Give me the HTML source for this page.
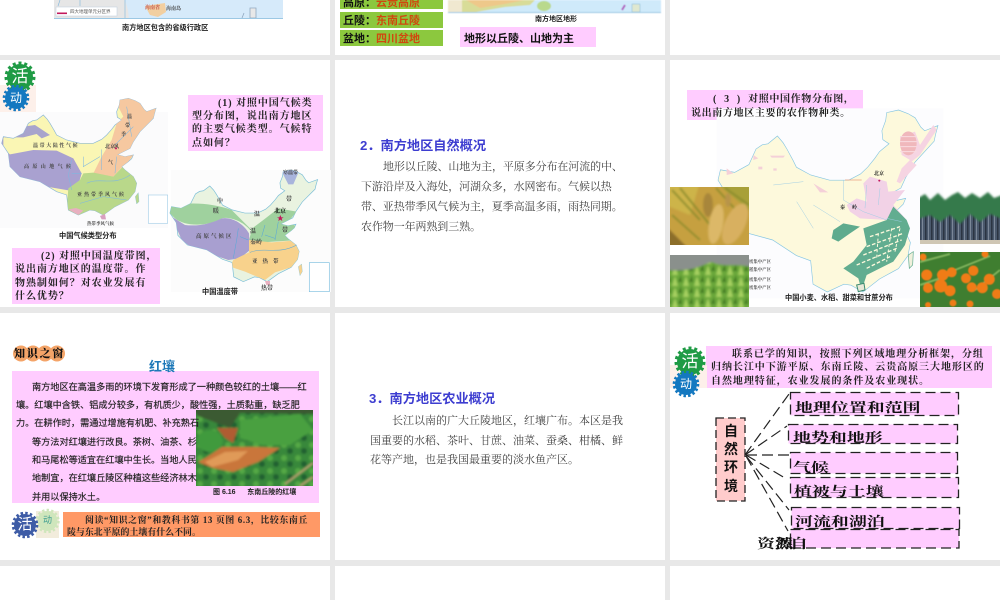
<!DOCTYPE html>
<html lang="zh"><head><meta charset="utf-8"><title>南方地区</title>
<style>
html,body{margin:0;padding:0;background:#e8e8e8}
#p{position:relative;width:1000px;height:600px;overflow:hidden;background:#e8e8e8;font-family:"Liberation Serif","Noto Serif CJK SC",serif}
.s{position:absolute;background:#fff}
.b{position:absolute}
.t{position:absolute;white-space:nowrap;line-height:14px;color:#222}
.sa{font-family:"Liberation Sans","Noto Sans CJK SC",sans-serif}
.q{font-size:10px;letter-spacing:.95px;font-weight:700;color:#222}
.c{font-family:"Liberation Sans","Noto Sans CJK SC",sans-serif;font-weight:700;color:#222}
.h{font-family:"Liberation Sans","Noto Sans CJK SC",sans-serif;font-weight:700;font-size:13.2px;color:#3d3dd0}
.d{font-size:11px;color:#444}
.r{font-family:"Liberation Sans","Noto Sans CJK SC",sans-serif;font-size:9.17px;color:#222;-webkit-text-stroke:.15px #222}
.o{font-size:8.9px;font-weight:700;color:#222}
.w{font-size:13px;font-weight:700;color:#111;transform-origin:0 50%;transform:scaleX(1.38)}
.z{font-size:11px;font-weight:700;color:#111;font-family:"Liberation Sans","Noto Sans CJK SC",sans-serif}
.m{font-size:5px;font-weight:700;color:#444}
.g{font-family:"Liberation Sans","Noto Sans CJK SC",sans-serif;color:#fff;text-align:center}
svg{position:absolute;left:0;top:0}
</style></head><body><div id="p">
<div class="s" style="left:0;top:0;width:330px;height:55px"></div>
<div class="s" style="left:335px;top:0;width:330px;height:55px"></div>
<div class="s" style="left:670px;top:0;width:330px;height:55px"></div>
<div class="s" style="left:0;top:60px;width:330px;height:247px"></div>
<div class="s" style="left:335px;top:60px;width:330px;height:247px"></div>
<div class="s" style="left:670px;top:60px;width:330px;height:247px"></div>
<div class="s" style="left:0;top:313px;width:330px;height:247px"></div>
<div class="s" style="left:335px;top:313px;width:330px;height:247px"></div>
<div class="s" style="left:670px;top:313px;width:330px;height:247px"></div>
<div class="s" style="left:0;top:566px;width:330px;height:34px"></div>
<div class="s" style="left:335px;top:566px;width:330px;height:34px"></div>
<div class="s" style="left:670px;top:566px;width:330px;height:34px"></div>

<div class="b" style="left:188px;top:95px;width:135px;height:56px;background:#fcf"></div>
<div class="b" style="left:12px;top:248px;width:148px;height:56px;background:#fcf"></div>
<div class="b" style="left:687px;top:90px;width:176px;height:30px;background:#fcf"></div>
<div class="b" style="left:12px;top:371px;width:307px;height:132px;background:#fcf"></div>
<div class="b" style="left:706px;top:346px;width:286px;height:42px;background:#fcf"></div>
<div class="b" style="left:460px;top:27px;width:136px;height:20px;background:#fcf"></div>
<div class="b" style="left:340px;top:0;width:103px;height:9px;background:#8cc83e"></div>
<div class="b" style="left:340px;top:12px;width:103px;height:16px;background:#8cc83e"></div>
<div class="b" style="left:340px;top:30px;width:103px;height:16px;background:#8cc83e"></div>
<div class="b" style="left:63px;top:512px;width:257px;height:25px;background:#f96"></div>
<div class="b" style="left:36px;top:511px;width:23px;height:27px;background:#f2ecdc"></div>
<div class="b" style="left:0;top:85px;width:36px;height:27px;background:#fdf0ea"></div>
<div class="b" style="left:670px;top:365px;width:37px;height:23px;background:#fdf0ea"></div>

<svg width="1000" height="600" viewBox="0 0 1000 600" style="filter:blur(.3px)">
<defs>
<path id="cn" d="M85,190 L98,182 110,180 130,165 142,178 150,190 163,212 170,225 200,240 240,250 280,250 305,238 320,225 335,208 345,195 365,180 352,172 350,155 358,135 360,120 385,115 405,122 420,130 432,148 440,155 468,145 463,162 460,175 440,195 420,215 400,245 390,265 360,280 352,284 375,290 400,285 395,296 385,305 365,320 375,330 400,350 410,370 405,395 385,420 345,440 310,465 285,452 270,450 235,465 205,450 200,405 170,395 120,365 60,350 30,320 25,280 5,250 10,230 40,235 70,220 Z"/>
<clipPath id="c1"><use href="#cn"/></clipPath>
<clipPath id="c2"><use href="#cn" transform="translate(10,-95) scale(.957)"/></clipPath>
<filter id="bm" x="-5%" y="-5%" width="110%" height="110%"><feGaussianBlur stdDeviation=".45"/></filter>
<filter id="bp" x="-5%" y="-5%" width="110%" height="110%"><feGaussianBlur stdDeviation="1"/></filter>
<pattern id="cane" width="6" height="40" patternUnits="userSpaceOnUse"><rect width="6" height="40" fill="#4a586c"/><rect x="1" width="1.5" height="40" fill="#2b3442"/><rect x="4" width="1" height="40" fill="#7b8798"/></pattern>
<pattern id="leaf" width="11" height="11" patternUnits="userSpaceOnUse"><rect width="11" height="11" fill="#6ba83a"/><path d="M1,11 L4,1 7,11Z" fill="#a6d060"/><path d="M7,7 L10,0 11,7Z" fill="#427a24"/></pattern>
<pattern id="forest" width="14" height="13" patternUnits="userSpaceOnUse"><rect width="14" height="13" fill="#38883a"/><circle cx="4" cy="3" r="3" fill="#55a844"/><circle cx="10" cy="9" r="3" fill="#216030"/></pattern>
</defs>

<!-- top-left map fragment -->
<rect x="54" y="0" width="229" height="19" fill="#d6eafa"/>
<path d="M54,0 H125 L128,10 129,19 H54Z" fill="#e6e6e6"/>
<rect x="56" y="7" width="61" height="9" fill="#fff" stroke="#bcd" stroke-width=".5"/>
<rect x="57" y="12.5" width="10" height="1.6" fill="#c2185b"/>
<path d="M145,6 L165,3 166,12 158,17 150,15Z" fill="#f2cfa0"/>
<path d="M125,0 V19 M60,0 L58,6 M80,0 V6" stroke="#7fb6dc" stroke-width=".6" fill="none"/>
<path d="M244,13 L242,18 M250,8 H256 V18 H250Z" stroke="#90a8c0" stroke-width=".8" fill="#e8e8e8"/>
<rect x="54" y="18" width="229" height="1" fill="#9cc8e4"/>

<!-- top-middle terrain map -->
<g filter="url(#bm)">
<rect x="448" y="0" width="213" height="13" fill="#cfeafa"/>
<path d="M448,0 H535 L530,5 505,7 470,13 H448Z" fill="#d8dc98"/>
<path d="M448,0 H462 V13 H448Z" fill="#f0e8d0"/>
<path d="M466,0 H525 L505,4 480,8Z" fill="#eec88a"/>
<ellipse cx="544" cy="6" rx="7" ry="5" fill="#b9d98c"/>
<path d="M625,5 L622,10" stroke="#b060c0" stroke-width="2"/>
<path d="M632,4 H640 V12 H632Z" fill="#e0e8d0" stroke="#7fb6dc" stroke-width=".5"/>
<rect x="448" y="12" width="213" height="1" fill="#9cc8e4"/>
</g>

<!-- climate map -->
<rect x="0" y="112" width="168" height="116" fill="#fbfbfc"/>
<g transform="translate(0,60) scale(.3333)" filter="url(#bm)">
<use href="#cn" fill="#faf6b4" stroke="#8cb8d8" stroke-width="2"/>
<g clip-path="url(#c1)">
<path d="M70,200 L105,195 150,225 125,235 110,222 70,232 10,232 V260 L0,240Z" fill="#a8a4cc"/>
<path d="M0,260 L30,283 100,270 170,272 220,295 245,340 235,375 210,392 140,380 60,360 0,320Z" fill="#a9a1d0"/>
<path d="M370,170 L350,190 335,240 305,290 280,340 340,350 365,322 385,305 400,285 375,288 355,284 395,268 430,210 480,150 400,100 340,110Z" fill="#f6c8a0"/>
<path d="M205,385 L240,360 250,340 280,338 340,350 370,318 400,340 430,380 400,430 340,460 300,480 230,470 200,450Z" fill="#b9d88a"/>
<path d="M205,448 L235,465 250,452 228,444Z" fill="#e8b0c0"/>
</g>
<path d="M215,300 L205,345 215,390 M215,340 L245,340 M260,370 C300,350 340,380 390,345 M250,290 L250,320 300,290 M305,268 V330 M350,290 L345,340 M240,430 L310,410 380,420 M380,140 L395,230 M345,255 L400,200" stroke="#7fb8e0" stroke-width="1.6" fill="none"/>
<path d="M300,468 L315,462 318,478 305,478Z" fill="#d8a0c0"/>
<path d="M406,410 L415,398 417,425 410,432Z" fill="#b9d88a" stroke="#7fb8e0"/>
<rect x="445" y="405" width="58" height="85" fill="#fff" stroke="#a8d0e8" stroke-width="2"/>
<circle cx="348" cy="265" r="3" fill="#c2185b"/>
</g>

<!-- temperature zone map -->
<rect x="171" y="170" width="160" height="122" fill="#fcfcfc"/>
<g transform="translate(165,165) scale(.3333)" filter="url(#bm)">
<use href="#cn" transform="translate(10,-95) scale(.957)" fill="#e9f3e0" stroke="#7fc0d8" stroke-width="2.2"/>
<g clip-path="url(#c2)">
<path d="M0,130 C50,110 130,110 200,135 L260,195 250,235 400,225 395,185 370,170 395,140 340,130 295,165 255,195 C230,165 190,155 170,160 C130,185 60,185 30,160Z" fill="#9fd19e"/>
<path d="M20,155 L60,180 C100,185 140,175 170,160 C200,155 235,175 252,205 L255,255 225,280 190,285 140,268 90,255 50,225Z" fill="#a89fd0"/>
<path d="M205,285 L252,262 252,225 320,232 395,226 420,260 385,305 330,322 300,345 240,320 195,305Z" fill="#f8d28c"/>
<path d="M340,0 H410 L385,58 370,58Z" fill="#a8b4dc"/>
</g>
<path d="M220,190 L215,225 205,280 M225,215 L250,225 M255,262 C300,245 340,270 395,240 M300,180 L290,215 M340,170 L330,225 M300,210 L330,220" stroke="#5aa8d8" stroke-width="1.6" fill="none"/>
<path d="M343,157 l3,-7 3,7 7,0 -6,4 2,7 -6,-4 -6,4 2,-7 -6,-4Z" fill="#c2185b"/>
<path d="M400,305 L410,297 412,320 405,332Z" fill="#f8d28c" stroke="#7fc0d8"/>
<path d="M300,348 L315,348 315,360 304,360Z" fill="#e8b0c0"/>
<rect x="433" y="293" width="60" height="87" fill="#fff" stroke="#7fc0e0" stroke-width="2"/>
</g>

<!-- crop map -->
<g transform="translate(720,105) scale(.3333)" filter="url(#bm)">
<rect x="-10" y="10" width="680" height="570" fill="#fcfcfe"/>
<use href="#cn" transform="translate(-13,-164.4) scale(1.425,1.56)" fill="#fdf9dc" stroke="#86c6e2" stroke-width="1.3"/>
<path d="M540,95 L585,80 600,120 640,60 650,75 600,150 575,170 590,180 540,235 530,230 545,190 570,165 545,150Z" fill="#f6d4e2"/>
<ellipse cx="565" cy="115" rx="25" ry="36" fill="#f0b8bc"/>
<path d="M540,95 H590 M540,110 H590 M540,125 H590 M540,140 H590" stroke="#f9dbe0" stroke-width="3"/>
<path d="M430,235 L450,215 500,230 505,260 555,255 520,300 560,345 500,345 420,340 390,320 380,300 410,280 440,290Z" fill="#f2d2e6"/>
<path d="M280,235 L325,262 300,262Z M100,150 L115,160 100,165Z M150,152 H195 L190,158 H155Z M20,190 L40,205 20,210Z M115,185 h12 v8 h-12Z M160,190 h10 v7 h-10Z" fill="#f4d0d8"/>
<path d="M340,375 L370,355 420,365 390,385 355,410 335,400Z" fill="#5fab8e"/>
<path d="M430,370 L500,345 520,305 560,345 570,370 555,420 520,470 440,510 425,555 415,520 370,490 400,470 440,420Z" fill="#62ad90"/>
<path d="M450,395 L540,365 M440,425 L550,385 M430,450 L545,405 M410,480 L530,430 M440,490 L510,455" stroke="#fdf9dc" stroke-width="4" stroke-dasharray="11 6" fill="none"/>
<path d="M475,385 L470,460 M515,370 L500,470 M540,370 L525,440" stroke="#fdf9dc" stroke-width="3" stroke-dasharray="9 7" fill="none"/>
<path d="M370,225 L370,285 430,320 500,345 M440,240 L435,310 M480,250 L475,300 M360,350 L280,300 M160,240 L250,230 M230,290 L280,370 M500,340 L545,350" stroke="#9ccce4" stroke-width="1.4" fill="none"/>
<path d="M375,225 H425" stroke="#e8a080" stroke-width="2"/>
<path d="M410,540 L432,535 435,555 415,560Z" fill="#e8e8d8" stroke="#3a8a70" stroke-width="3"/>
<path d="M565,450 L580,440 578,480 568,490Z" fill="#f0f0dc" stroke="#5fab8e" stroke-width="2"/>
<circle cx="478" cy="227" r="3" fill="#c2185b"/>
</g>

<!-- rice -->
<svg x="670" y="187" width="79" height="58" viewBox="670 187 79 58">
<g filter="url(#bp)">
<rect x="665" y="182" width="90" height="68" fill="#c6a040"/>
<path d="M665,182 H700 L690,215 665,205Z" fill="#cdb44a"/>
<path d="M715,182 H755 V215Z" fill="#a8a038"/>
<path d="M665,225 L690,250 H665Z" fill="#8c6e2a"/>
<path d="M672,190 L700,220 M680,188 L710,225 M716,188 L745,220 M725,188 L749,205 M672,215 L700,240" stroke="#8a8c2c" stroke-width="1.8" fill="none"/>
<ellipse cx="708" cy="205" rx="5" ry="12" fill="#a8863a"/><ellipse cx="716" cy="224" rx="7" ry="20" fill="#dcb868" transform="rotate(10 716 224)"/><ellipse cx="735" cy="224" rx="10" ry="22" fill="#d8b060" transform="rotate(25 735 224)"/><ellipse cx="728" cy="200" rx="3" ry="7" fill="#b89448"/>
</g></svg>
<!-- tea -->
<svg x="670" y="255" width="79" height="52" viewBox="670 255 79 52">
<g filter="url(#bp)" >
<rect x="665" y="250" width="90" height="62" fill="url(#leaf)"/>
<path d="M665,250 H755 V268 C735,262 725,268 712,262 C700,265 695,272 665,270Z" fill="#8a908c"/>
</g></svg>
<!-- sugar cane -->
<svg x="920" y="190" width="80" height="54" viewBox="920 190 80 54">
<rect x="920" y="207" width="80" height="33" fill="url(#cane)"/>
<g filter="url(#bp)">
<path d="M915,200 L925,194 930,200 938,193 945,200 952,195 958,192 965,198 972,193 980,198 988,192 994,198 1005,194 V220 L990,214 980,222 970,214 960,224 950,215 940,222 930,215 915,220Z" fill="#357a4c"/>
</g>
<rect x="920" y="240" width="80" height="4" fill="#cfc6b4"/>
</svg>
<!-- orange -->
<svg x="920" y="252" width="80" height="55" viewBox="920 252 80 55">
<rect x="920" y="252" width="80" height="55" fill="#3f7e30"/>
<g filter="url(#bm)">
<path d="M920,262 L950,254 M955,270 L990,256 M920,285 L950,275 M975,290 L1000,270" stroke="#7eb05a" stroke-width="2"/>
<g fill="#f07c14"><circle cx="926.7" cy="275" r="5.5"/><circle cx="942.7" cy="275" r="5.7"/><circle cx="951.7" cy="272.3" r="5"/><circle cx="973.3" cy="270.700" r="5.2"/><circle cx="966" cy="278.3" r="5"/><circle cx="989.3" cy="279.3" r="5.5"/><circle cx="940.7" cy="286" r="6.5"/><circle cx="950" cy="290.7" r="5.5"/><circle cx="971.7" cy="287.3" r="5"/><circle cx="982.3" cy="287.7" r="5.5"/><circle cx="997" cy="294" r="5"/><circle cx="928" cy="288" r="5"/><circle cx="923" cy="257" r="3.5"/><circle cx="985" cy="254" r="3.5"/><circle cx="953" cy="303" r="3.5"/><circle cx="970" cy="304" r="3.5"/><circle cx="928" cy="305" r="3"/></g>
</g></svg>
<!-- soil photo -->
<svg x="196" y="410" width="117" height="76" viewBox="196 410 117 76">
<g filter="url(#bp)">
<rect x="190" y="405" width="130" height="86" fill="url(#forest)"/>
<path d="M190,405 H320 V414 L240,413 230,428 198,416Z" fill="#3a5a30"/>
<path d="M240,420 L300,414 313,430 290,445 262,445 240,438Z" fill="#48a040"/>
<ellipse cx="210" cy="441" rx="13" ry="11" fill="#3f9a3c"/>
<path d="M217,428 L238,428 233,443 225,438Z" fill="#b05c30"/>
<path d="M222,447 L257,447 280,448 258,462 250,465 233,472 213,468 198,462 207,457Z" fill="#c9763a"/>
<path d="M205,462 L225,452 248,451 238,460 212,467Z" fill="#e09a58"/>
<path d="M285,484 L313,463 M300,486 L313,477" stroke="#b2a070" stroke-width="2"/>
</g></svg>
<!-- know badge -->
<g fill="#f4a468"><circle cx="21" cy="353.5" r="8"/><circle cx="33" cy="353.5" r="8"/><circle cx="45" cy="353.5" r="8"/><circle cx="57" cy="353.5" r="8"/></g>
<!-- gears -->
<circle cx="20" cy="77" r="13" fill="#1f9b45"/><circle cx="20" cy="77" r="14" fill="none" stroke="#1f9b45" stroke-width="3" stroke-dasharray="3 2.85"/>
<circle cx="16" cy="98" r="11" fill="#1478c0"/><circle cx="16" cy="98" r="12" fill="none" stroke="#1478c0" stroke-width="2.6" stroke-dasharray="2.5 2.2"/>
<circle cx="690" cy="362" r="13" fill="#1f9b45"/><circle cx="690" cy="362" r="14" fill="none" stroke="#1f9b45" stroke-width="3" stroke-dasharray="3 2.85"/>
<circle cx="686" cy="384" r="11" fill="#1478c0"/><circle cx="686" cy="384" r="12" fill="none" stroke="#1478c0" stroke-width="2.6" stroke-dasharray="2.5 2.2"/>
<circle cx="47.500" cy="521" r="10" fill="#cfe6bc"/><circle cx="47.500" cy="521" r="11" fill="none" stroke="#cfe6bc" stroke-width="2.4" stroke-dasharray="2.4 2.2"/>
<circle cx="25" cy="525" r="11" fill="#3e5ca6"/><circle cx="25" cy="525" r="12" fill="none" stroke="#3e5ca6" stroke-width="2.6" stroke-dasharray="2.5 2.2"/>

<!-- framework -->
<rect x="716" y="418" width="29" height="83" fill="#fcc" stroke="#222" stroke-width="1.3" stroke-dasharray="8 4"/>
<g fill="#fcf" stroke="#222" stroke-width="1.3" stroke-dasharray="10 5">
<rect x="790.500" y="392.500" width="168" height="23"/>
<rect x="788.500" y="424.500" width="169" height="19"/>
<rect x="790.500" y="452.500" width="167" height="21"/>
<rect x="790.500" y="477.500" width="168" height="20"/>
<rect x="791.500" y="507.500" width="168" height="21"/>
<rect x="790.500" y="529.500" width="168.500" height="18.500"/>
</g>
<g stroke="#222" stroke-width="1.2" stroke-dasharray="11 5" fill="none">
<path d="M745,455 L789,394"/><path d="M745,455 L787,426"/><path d="M746,455 H789"/><path d="M746,455 L785,478"/><path d="M746,456 L789,510"/><path d="M746,456 L788,531"/>
</g>
</svg>

<div style="position:absolute;inset:0;filter:blur(.3px)">
<div class="t c" style="left:122px;top:21px;font-size:7.200px">南方地区包含的省级行政区</div>
<div class="t sa" style="left:70px;top:5px;font-size:4.500px;color:#555">四大地理单元分区界</div>
<div class="t m" style="left:145px;top:2px;color:#c2504a">海南省</div><div class="t m" style="left:166px;top:3px">海南岛</div>
<div class="t z" style="left:343px;top:-4px">高原：<span style="color:#d0480e">云贵高原</span></div>
<div class="t z" style="left:343px;top:14px">丘陵：<span style="color:#d0480e">东南丘陵</span></div>
<div class="t z" style="left:343px;top:32px">盆地：<span style="color:#d0480e">四川盆地</span></div>
<div class="t c" style="left:535px;top:13px;font-size:7px">南方地区地形</div>
<div class="t z" style="left:464px;top:32px">地形以丘陵、山地为主</div>
<div class="t g" style="left:8px;top:67px;width:24px;font-size:17px;line-height:20px">活</div>
<div class="t g" style="left:5px;top:91px;width:22px;font-size:12px">动</div>
<div class="t q" style="left:218px;top:97px">(1) 对照中国气候类</div>
<div class="t q" style="left:192px;top:110px">型分布图，说出南方地区</div>
<div class="t q" style="left:192px;top:123px">的主要气候类型。气候特</div>
<div class="t q" style="left:192px;top:137px">点如何？</div>
<div class="t q" style="left:41px;top:250px">(2) 对照中国温度带图，</div>
<div class="t q" style="left:15px;top:263px">说出南方地区的温度带。作</div>
<div class="t q" style="left:15px;top:277px">物熟制如何？对农业发展有</div>
<div class="t q" style="left:15px;top:290px">什么优势？</div>
<div class="t c" style="left:59px;top:229px;font-size:7.200px">中国气候类型分布</div>
<div class="t c" style="left:202px;top:285px;font-size:7.200px">中国温度带</div>
<div class="t m" style="left:33px;top:140px;letter-spacing:1.600px">温带大陆性气候</div>
<div class="t m" style="left:24px;top:161px;letter-spacing:3.400px">高原山地气候</div>
<div class="t m" style="left:77px;top:189px;letter-spacing:2px">亚热带季风气候</div>
<div class="t m" style="left:87px;top:217px;font-size:4.500px">热带季风气候</div>
<div class="t m" style="left:127px;top:111px">温</div><div class="t m" style="left:125px;top:120px">带</div><div class="t m" style="left:121px;top:129px">季</div><div class="t m" style="left:114px;top:141px">风</div><div class="t m" style="left:108px;top:157px">气</div>
<div class="t m" style="left:105px;top:141px">北京</div>
<div class="t m" style="left:283px;top:167px">寒温带</div>
<div class="t m" style="left:217px;top:195px;font-size:6px">中</div><div class="t m" style="left:213px;top:205px;font-size:6px">暖</div><div class="t m" style="left:254px;top:208px;font-size:6px">温</div><div class="t m" style="left:286px;top:193px;font-size:6px">带</div>
<div class="t m" style="left:274px;top:205px;font-size:6px;color:#111">北京</div>
<div class="t m" style="left:196px;top:230px;font-size:5.500px;letter-spacing:2px">高原气候区</div>
<div class="t m" style="left:250px;top:225px;font-size:6px">温</div><div class="t m" style="left:250px;top:236px;font-size:6px">秦岭</div><div class="t m" style="left:282px;top:224px;font-size:6px">带</div>
<div class="t m" style="left:252px;top:255px;font-size:5.500px;letter-spacing:5px">亚热带</div>
<div class="t m" style="left:261px;top:282px;font-size:6px">热带</div>
<div class="t h" style="left:360px;top:139px">2．南方地区自然概况</div>
<div class="t d" style="left:383px;top:160px;letter-spacing:-.1px">地形以丘陵、山地为主，平原多分布在河流的中、</div>
<div class="t d" style="left:361px;top:180px;letter-spacing:-.1px">下游沿岸及入海处，河湖众多，水网密布。气候以热</div>
<div class="t d" style="left:361px;top:200px;letter-spacing:-.1px">带、亚热带季风气候为主，夏季高温多雨，雨热同期。</div>
<div class="t d" style="left:361px;top:220px;letter-spacing:-.1px">农作物一年两熟到三熟。</div>
<div class="t q" style="left:713px;top:93px;letter-spacing:.65px;word-spacing:4px">( 3 ) 对照中国作物分布图，</div>
<div class="t q" style="left:691px;top:107px;letter-spacing:.65px">说出南方地区主要的农作物种类。</div>
<div class="t c" style="left:785px;top:291px;font-size:7.200px">中国小麦、水稻、甜菜和甘蔗分布</div>
<div class="t m" style="left:749px;top:255px;color:#555;font-size:4.400px">密集中产区</div><div class="t m" style="left:749px;top:263px;color:#555;font-size:4.400px">稻集中产区</div><div class="t m" style="left:749px;top:273px;color:#555;font-size:4.400px">密集中产区</div><div class="t m" style="left:749px;top:281px;color:#555;font-size:4.400px">密集中产区</div>
<div class="t m" style="left:874px;top:168px;color:#222">北京</div><div class="t m" style="left:840px;top:202px;color:#222;letter-spacing:7px">秦岭</div>
<div class="t" style="left:14px;top:346px;font-size:11px;letter-spacing:1.800px;font-weight:900;color:#111;font-family:'Noto Serif CJK SC',serif">知识之窗</div>
<div class="t" style="left:149px;top:360px;font-size:13px;font-weight:700;color:#1d78b8;font-family:'Liberation Sans','Noto Sans CJK SC',sans-serif">红壤</div>
<div class="t r" style="left:32px;top:380px">南方地区在高温多雨的环境下发育形成了一种颜色较红的土壤——红</div>
<div class="t r" style="left:16px;top:398px">壤。红壤中含铁、铝成分较多，有机质少，酸性强，土质黏重，缺乏肥</div>
<div class="t r" style="left:16px;top:416px">力。在耕作时，需通过增施有机肥、补充熟石</div>
<div class="t r" style="left:32px;top:435px">等方法对红壤进行改良。茶树、油茶、杉</div>
<div class="t r" style="left:32px;top:453px">和马尾松等适宜在红壤中生长。当地人民</div>
<div class="t r" style="left:32px;top:471px">地制宜，在红壤丘陵区种植这些经济林木</div>
<div class="t r" style="left:32px;top:490px">并用以保持水土。</div>
<div class="t c" style="left:213px;top:486px;font-size:7px;white-space:pre">图 6.16      东南丘陵的红壤</div>
<div class="t g" style="left:13px;top:518px;width:24px;font-size:15px">活</div>
<div class="t g" style="left:37px;top:513px;width:21px;font-size:9px;color:#3c9c90">动</div>
<div class="t o" style="left:85px;top:513px;letter-spacing:.65px">阅读“知识之窗”和教科书第 13 页图 6.3，比较东南丘</div>
<div class="t o" style="left:67px;top:525px;letter-spacing:.05px">陵与东北平原的土壤有什么不同。</div>
<div class="t h" style="left:369px;top:392px">3．南方地区农业概况</div>
<div class="t d" style="left:392px;top:414px">长江以南的广大丘陵地区，红壤广布。本区是我</div>
<div class="t d" style="left:370px;top:434px">国重要的水稻、茶叶、甘蔗、油菜、蚕桑、柑橘、鲜</div>
<div class="t d" style="left:370px;top:453px">花等产地，也是我国最重要的淡水鱼产区。</div>
<div class="t g" style="left:678px;top:352px;width:24px;font-size:17px;line-height:20px">活</div>
<div class="t g" style="left:675px;top:377px;width:22px;font-size:12px">动</div>
<div class="t q" style="left:732px;top:348px">联系已学的知识，按照下列区域地理分析框架，分组</div>
<div class="t q" style="left:711px;top:361px">归纳长江中下游平原、东南丘陵、云贵高原三大地形区的</div>
<div class="t q" style="left:711px;top:375px">自然地理特征，农业发展的条件及农业现状。</div>
<div class="t c" style="left:724px;top:424px;font-size:14px;color:#111">自</div>
<div class="t c" style="left:724px;top:442px;font-size:14px;color:#111">然</div>
<div class="t c" style="left:724px;top:460px;font-size:14px;color:#111">环</div>
<div class="t c" style="left:724px;top:479px;font-size:14px;color:#111">境</div>
<div class="t w" style="left:795px;top:401px">地理位置和范围</div>
<div class="t w" style="left:793px;top:431px">地势和地形</div>
<div class="t w" style="left:793px;top:461px">气候</div>
<div class="t w" style="left:794px;top:485px">植被与土壤</div>
<div class="t w" style="left:795px;top:515px">河流和湖泊</div>
<div class="t w" style="left:757px;top:537px">资源</div>
<div class="t w" style="left:775px;top:537px">然</div>
<div class="t w" style="left:790px;top:537px">自</div>
</div>
</div></body></html>
